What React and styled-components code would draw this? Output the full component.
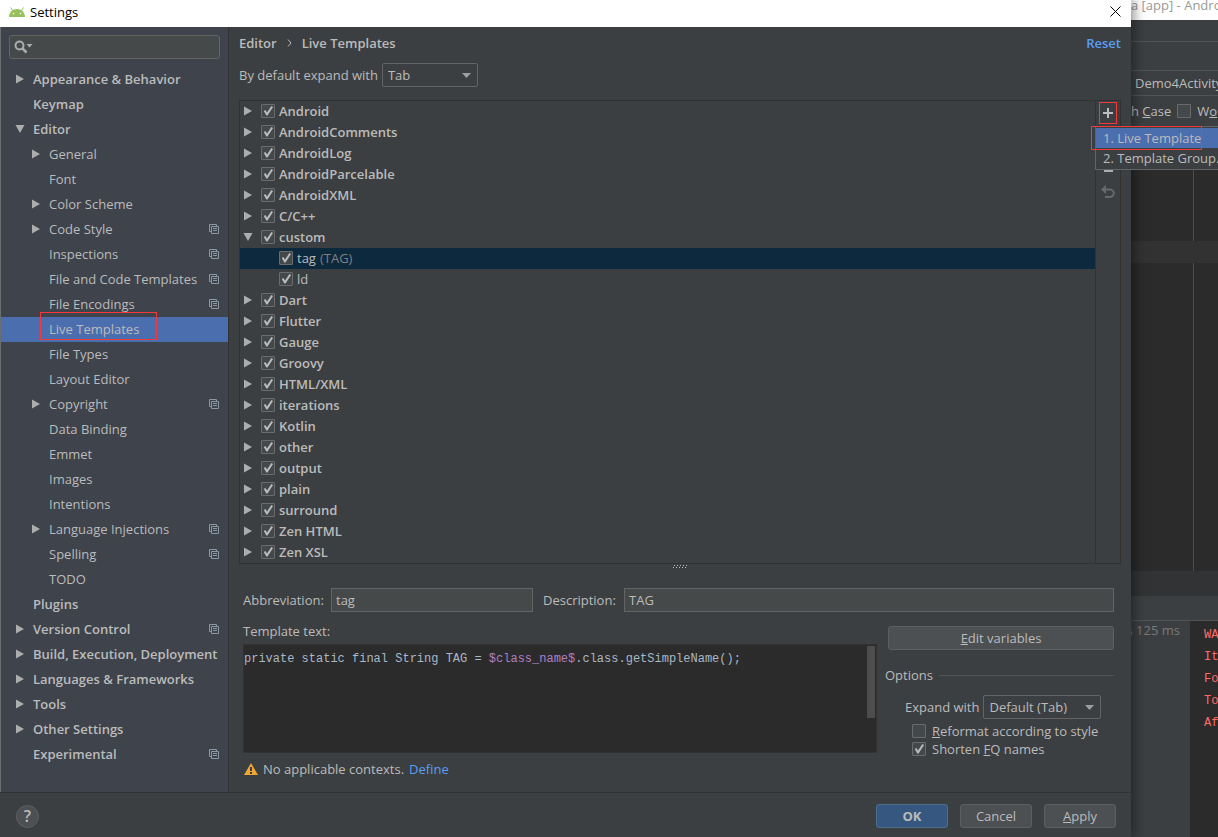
import React from 'react'
import styled, { createGlobalStyle } from 'styled-components'

const settings = [
  { label: 'Appearance & Behavior', arrow: 'right' },
  { label: 'Keymap' },
  { label: 'Editor', arrow: 'down' },
  { label: 'General', arrow: 'right', child: true },
  { label: 'Font', child: true },
  { label: 'Color Scheme', arrow: 'right', child: true },
  { label: 'Code Style', arrow: 'right', child: true, project: true },
  { label: 'Inspections', child: true, project: true },
  { label: 'File and Code Templates', child: true, project: true },
  { label: 'File Encodings', child: true, project: true },
  { label: 'Live Templates', child: true, selected: true },
  { label: 'File Types', child: true },
  { label: 'Layout Editor', child: true },
  { label: 'Copyright', arrow: 'right', child: true, project: true },
  { label: 'Data Binding', child: true },
  { label: 'Emmet', child: true },
  { label: 'Images', child: true },
  { label: 'Intentions', child: true },
  { label: 'Language Injections', arrow: 'right', child: true, project: true },
  { label: 'Spelling', child: true, project: true },
  { label: 'TODO', child: true },
  { label: 'Plugins' },
  { label: 'Version Control', arrow: 'right', project: true },
  { label: 'Build, Execution, Deployment', arrow: 'right' },
  { label: 'Languages & Frameworks', arrow: 'right' },
  { label: 'Tools', arrow: 'right' },
  { label: 'Other Settings', arrow: 'right' },
  { label: 'Experimental', project: true },
]

const templates = [
  { label: 'Android' },
  { label: 'AndroidComments' },
  { label: 'AndroidLog' },
  { label: 'AndroidParcelable' },
  { label: 'AndroidXML' },
  { label: 'C/C++' },
  { label: 'custom', open: true },
  { label: 'tag', note: '(TAG)', child: true, selected: true },
  { label: 'ld', child: true },
  { label: 'Dart' },
  { label: 'Flutter' },
  { label: 'Gauge' },
  { label: 'Groovy' },
  { label: 'HTML/XML' },
  { label: 'iterations' },
  { label: 'Kotlin' },
  { label: 'other' },
  { label: 'output' },
  { label: 'plain' },
  { label: 'surround' },
  { label: 'Zen HTML' },
  { label: 'Zen XSL' },
]

const Arrow = ({ direction }) => (
  <svg width="10" height="10" viewBox="0 0 10 10" fill="#adadad">
    {direction === 'right' && <path d="M1 0.5 9 5 1 9.5z" />}
    {direction === 'down' && <path d="M0.5 1h9L5 9z" />}
  </svg>
)

const ProjectIcon = () => (
  <svg width="10" height="10" viewBox="0 0 10 10" fill="none" stroke="#8a97a5">
    <path d="M2 7.5H.5v-7h7V2" />
    <path d="M2.5 2.5h7v7h-7zM4 4.500h4M4 6.500h4" />
  </svg>
)

const Design = () => {
  return (
    <Screen>
      <GlobalStyle />
      <Dialog>
        <TitleBar>
          <svg width="16" height="10" viewBox="0 0 16 10">
            <path d="M0 10a8 8 0 0 1 16 0z" fill="#97c15c" />
            <path d="M1.500 .5 4 4M14.500 .5l-2.500 3.500" stroke="#97c15c" />
            <circle cx="4.500" cy="6.500" r=".8" fill="#fff" />
            <circle cx="11.500" cy="6.500" r=".8" fill="#fff" />
          </svg>
          <h1>Settings</h1>
          <CloseButton aria-label="Close">
            <svg width="11" height="11" viewBox="0 0 11 11" stroke="#000">
              <path d="M.5.5l10 10M10.500.5l-10 10" />
            </svg>
          </CloseButton>
        </TitleBar>
        <Body>
          {/* Settings tree */}
          <Sidebar>
            <Search>
              <svg width="19" height="14" viewBox="0 0 19 14">
                <circle cx="5.500" cy="5.500" r="4" fill="none" stroke="#adadad" strokeWidth="2" />
                <path d="M8.500 8.500l4 4" stroke="#adadad" strokeWidth="2.500" />
                <path d="M12.500 4h6l-3 3.500z" fill="#adadad" />
              </svg>
              <input type="text" aria-label="Search settings" />
            </Search>
            <ul>
              {settings.map(item => (
                <SettingRow key={item.label} $child={item.child} $selected={item.selected}>
                  <Arrow direction={item.arrow} />
                  <a href="#">{item.label}</a>
                  {item.project && <ProjectIcon />}
                  {item.selected && <SidebarMark />}
                </SettingRow>
              ))}
            </ul>
          </Sidebar>
          <Main>
            <Heading>
              <h2>Editor</h2>
              <svg width="5" height="8" viewBox="0 0 5 8" fill="none" stroke="#bbb">
                <path d="M1 .5 4 4 1 7.500" />
              </svg>
              <h2>Live Templates</h2>
              <a href="#">Reset</a>
            </Heading>
            <ExpandRow>
              <label htmlFor="default-expand">By default expand with</label>
              <SelectBox $width={96}>
                <select id="default-expand" defaultValue="Tab">
                  <option>Tab</option>
                  <option>Enter</option>
                  <option>Space</option>
                </select>
                <SelectArrow />
              </SelectBox>
            </ExpandRow>
            {/* Template groups */}
            <TreePanel>
              <ul>
                {templates.map(item => (
                  <TemplateRow key={item.label} $child={item.child} $selected={item.selected}>
                    <Arrow direction={item.child ? undefined : item.open ? 'down' : 'right'} />
                    <label>
                      <CheckBox type="checkbox" defaultChecked />
                      {item.label}
                      {item.note && <small>{item.note}</small>}
                    </label>
                  </TemplateRow>
                ))}
              </ul>
              <Toolbar>
                <AddButton aria-label="Add">
                  <svg width="12" height="12" viewBox="0 0 12 12" stroke="#bdbdbd" strokeWidth="2">
                    <path d="M6 1v10M1 6h10" />
                  </svg>
                </AddButton>
                <AddMenu>
                  <MenuItem $active>1. Live Template</MenuItem>
                  <MenuItem>2. Template Group...</MenuItem>
                  <MenuMark />
                </AddMenu>
                <ToolButton aria-label="Duplicate">
                  <svg width="12" height="12" viewBox="0 0 12 12" fill="#adadad">
                    <path d="M2 8h9v2H2z" />
                  </svg>
                </ToolButton>
                <ToolButton aria-label="Revert">
                  <svg width="14" height="14" viewBox="0 0 14 14" fill="none" stroke="#66696b" strokeWidth="2">
                    <path d="M3 4.500h6a3.500 3.500 0 0 1 0 7.500H4" />
                    <path d="M5 0v9L0 4.500z" fill="#66696b" stroke="none" />
                  </svg>
                </ToolButton>
              </Toolbar>
            </TreePanel>
            <Splitter>
              <svg width="16" height="5" viewBox="0 0 16 5" fill="#bbb">
                {[0, 3, 6, 9, 12].map(x => (
                  <path key={x} d={`M${x + 2} 1h1v1h-1zM${x + 1} 3h1v1h-1z`} />
                ))}
              </svg>
            </Splitter>
            {/* Template details */}
            <Details>
              <Fields>
                <label htmlFor="abbreviation">Abbreviation:</label>
                <TextInput id="abbreviation" defaultValue="tag" />
                <label htmlFor="description">Description:</label>
                <TextInput id="description" defaultValue="TAG" />
              </Fields>
              <Columns>
                <TextColumn>
                  <p>Template text:</p>
                  <CodeArea>
                    <code>
                      private static final String TAG = <var>$class_name$</var>
                      .class.getSimpleName();
                    </code>
                    <ScrollThumb />
                  </CodeArea>
                  <Context>
                    <svg width="14" height="12" viewBox="0 0 14 12">
                      <path d="M7 0l7 12H0z" fill="#f0a732" />
                      <path d="M6 4h2v4H6zM6 9h2v2H6z" fill="#3c3f41" />
                    </svg>
                    No applicable contexts. <a href="#">Define</a>
                  </Context>
                </TextColumn>
                <OptionsColumn>
                  <Button>
                    <u>E</u>dit variables
                  </Button>
                  <OptionsTitle>Options</OptionsTitle>
                  <OptionSelect>
                    <label htmlFor="expand-with">Expand with</label>
                    <SelectBox $width={118}>
                      <select id="expand-with" defaultValue="Default (Tab)">
                        <option>Default (Tab)</option>
                        <option>Enter</option>
                        <option>None</option>
                      </select>
                      <SelectArrow />
                    </SelectBox>
                  </OptionSelect>
                  <Option>
                    <CheckBox type="checkbox" />
                    <span>
                      <u>R</u>eformat according to style
                    </span>
                  </Option>
                  <Option>
                    <CheckBox type="checkbox" defaultChecked />
                    <span>
                      Shorten <u>F</u>Q names
                    </span>
                  </Option>
                </OptionsColumn>
              </Columns>
            </Details>
          </Main>
        </Body>
        <DialogFooter>
          <HelpButton aria-label="Help">?</HelpButton>
          <Button $primary>OK</Button>
          <Button>Cancel</Button>
          <Button>
            <u>A</u>pply
          </Button>
        </DialogFooter>
      </Dialog>
      {/* IDE window behind the dialog */}
      <Ide>
        <IdeTitle>a [app] - Andro</IdeTitle>
        <IdeBar $height={22} />
        <IdeBar $height={29} />
        <IdeBar $height={25}>
          <span>Demo4Activity.</span>
        </IdeBar>
        <FindBar>
          <span>
            h <u>C</u>ase
          </span>
          <label>
            <CheckBox type="checkbox" />
            <span>
              W<u>o</u>r
            </span>
          </label>
        </FindBar>
        <IdeEditor>
          <CaretRow />
        </IdeEditor>
        <IdeStrip />
        <IdeBar $height={25} />
        <Run>
          <RunTree>s 125 ms</RunTree>
          <Console>
            {['WA', 'It', 'Fo', 'To', 'Af'].map(line => (
              <p key={line}>{line}</p>
            ))}
          </Console>
        </Run>
      </Ide>
    </Screen>
  )
}

const SelectArrow = () => (
  <svg width="9" height="5" viewBox="0 0 9 5" fill="#9da0a2">
    <path d="M0 0h9L4.500 5z" />
  </svg>
)

const GlobalStyle = createGlobalStyle`
  * {
    box-sizing: border-box;
  }
  body {
    margin: 0;
    overflow: hidden;
    background: #3c3f41;
    color: #bbb;
    font: 13px/20px 'Open Sans', sans-serif;
  }
  h1, h2, p, ul {
    margin: 0;
    padding: 0;
    font-size: 13px;
    font-weight: inherit;
    list-style: none;
  }
  svg {
    display: block;
    flex: none;
  }
  a {
    color: #589df6;
    text-decoration: none;
  }
  button, input, select {
    font: inherit;
    color: inherit;
    margin: 0;
  }
`

const Screen = styled.div`
  display: flex;
  min-height: 100vh;
`

const Dialog = styled.section`
  position: relative;
  z-index: 1;
  flex: 1;
  min-width: 0;
  display: flex;
  flex-direction: column;
  background: #3c3f41;
  box-shadow: 2px 0 12px rgba(0, 0, 0, 0.5);
`

const TitleBar = styled.header`
  display: flex;
  align-items: center;
  height: 27px;
  padding: 0 10px 4px 9px;
  gap: 5px;
  background: #fff;
  color: #000;

  > h1 {
    flex: 1;
  }
`

const CloseButton = styled.button`
  padding: 0;
  border: 0;
  background: none;
`

const Body = styled.div`
  flex: 1;
  display: flex;
  border-left: 1px solid #6b6e70;
`

const Sidebar = styled.nav`
  flex: none;
  width: 228px;
  padding-top: 8px;
  background: #3e434c;
  border-right: 1px solid #323232;
`

const Search = styled.label`
  display: flex;
  align-items: center;
  height: 24px;
  margin: 0 8px 8px;
  padding-left: 4px;
  background: #45494a;
  border: 1px solid #646464;
  border-radius: 3px;

  > input {
    flex: 1;
    min-width: 0;
    border: 0;
    outline: 0;
    background: none;
  }
`

const SettingRow = styled.li`
  position: relative;
  display: flex;
  align-items: center;
  gap: 8px;
  height: 25px;
  padding: 0 9px 2px ${props => (props.$child ? '30px' : '14px')};
  background: ${props => (props.$selected ? '#4b6eaf' : 'none')};
  font-weight: ${props => (props.$child ? 400 : 600)};

  > a {
    flex: 1;
    color: inherit;
    white-space: nowrap;
  }
`

const SidebarMark = styled.div`
  position: absolute;
  left: 39px;
  top: -5px;
  width: 117px;
  height: 28px;
  border: 1px solid #f23a3a;
`

const Main = styled.main`
  flex: 1;
  min-width: 0;
  padding: 6px 10px 0;
`

const Heading = styled.div`
  display: flex;
  align-items: center;
  gap: 10px;
  font-weight: 600;

  > a {
    margin-left: auto;
  }
`

const ExpandRow = styled.div`
  display: flex;
  align-items: center;
  gap: 4px;
  margin: 10px 0 13px;
`

const SelectBox = styled.div`
  display: flex;
  align-items: center;
  width: ${props => props.$width}px;
  height: 24px;
  padding-right: 6px;
  border: 1px solid #646464;
  border-radius: 2px;

  > select {
    flex: 1;
    min-width: 0;
    padding: 0 5px;
    border: 0;
    outline: 0;
    appearance: none;
    background: none;
  }
`

const TreePanel = styled.div`
  display: flex;
  border: 1px solid #323232;

  > ul {
    flex: 1;
  }
`

const TemplateRow = styled.li`
  display: flex;
  align-items: center;
  gap: 8px;
  height: 21px;
  padding: 0 0 1px ${props => (props.$child ? '21px' : '3px')};
  background: ${props => (props.$selected ? '#0d293e' : 'none')};
  font-weight: ${props => (props.$child ? 400 : 600)};

  > label {
    display: flex;
    align-items: center;
    gap: 4px;
  }

  small {
    color: #808080;
    font-size: 13px;
  }
`

const CheckBox = styled.input`
  flex: none;
  width: 14px;
  height: 14px;
  appearance: none;
  background: #43494a;
  border: 1px solid #6b6b6b;
  border-radius: 1px;

  &:checked::before {
    content: '';
    display: block;
    width: 12px;
    height: 12px;
    background: #bbb;
    clip-path: polygon(15% 50%, 28% 42%, 42% 62%, 78% 8%, 92% 16%, 46% 88%, 36% 88%);
  }
`

const Toolbar = styled.div`
  position: relative;
  flex: none;
  width: 25px;
  padding-top: 1px;
  border-left: 1px solid #323232;
`

const ToolButton = styled.button`
  display: grid;
  place-items: center;
  width: 24px;
  height: 24px;
  padding: 0;
  border: 0;
  background: none;
`

const AddButton = styled.button`
  display: grid;
  place-items: center;
  width: 18px;
  height: 22px;
  margin: 0 3px 32px;
  padding: 0;
  background: none;
  border: 1px solid #f23a3a;
`

/* Opens under the add button and runs past the dialog's edge */
const AddMenu = styled.div`
  position: absolute;
  left: -1px;
  top: 25px;
  width: 140px;
  padding: 1px 0;
  background: #3c3f41;
  border: 1px solid #616365;
`

const MenuItem = styled.button`
  display: block;
  width: 100%;
  height: 20px;
  padding: 0 7px;
  border: 0;
  line-height: 18px;
  text-align: left;
  white-space: nowrap;
  background: ${props => (props.$active ? '#4b6eaf' : 'none')};
`

const MenuMark = styled.div`
  position: absolute;
  left: -5px;
  top: -1px;
  width: 111px;
  height: 24px;
  border: 1px solid #f23a3a;
`

const Splitter = styled.div`
  display: grid;
  place-items: center;
  height: 5px;
`

const Details = styled.div`
  padding: 19px 7px 12px 4px;
`

const Fields = styled.div`
  display: grid;
  grid-template-columns: 78px 202px 71px 1fr;
  align-items: center;
  gap: 10px;
  white-space: nowrap;
`

const TextInput = styled.input`
  min-width: 0;
  width: 100%;
  height: 24px;
  padding: 0 4px;
  background: #45494a;
  border: 1px solid #646464;
  outline: 0;
`

const Columns = styled.div`
  display: flex;
  gap: 8px;
`

const TextColumn = styled.div`
  flex: 1;
  min-width: 0;
  padding-top: 9px;
`

const CodeArea = styled.div`
  display: flex;
  justify-content: space-between;
  height: 109px;
  margin: 3px 0 6px;
  padding: 1px 1px 1px 0;
  background: #2b2b2b;
  border: 1px solid #323232;

  code {
    padding-top: 2px;
    color: #a9b7c6;
    font: 12px/22px 'Liberation Mono', monospace;
    white-space: nowrap;
  }

  var {
    color: #b07fc4;
    font-style: normal;
  }
`

const ScrollThumb = styled.div`
  width: 8px;
  height: 72px;
  background: #4d4d4d;
`

const Context = styled.p`
  display: flex;
  align-items: center;
  gap: 5px;
  padding-left: 1px;
`

const OptionsColumn = styled.div`
  width: 229px;
  padding-top: 14px;

  > button {
    width: 226px;
    margin-left: 3px;
  }
`

const Button = styled.button`
  width: 72px;
  height: 24px;
  padding: 0;
  border: 1px solid ${props => (props.$primary ? '#4c708c' : '#5e6060')};
  border-radius: 3px;
  background: ${props => (props.$primary ? '#365880' : '#4c5052')};
  font-weight: ${props => (props.$primary ? 700 : 400)};
`

const OptionsTitle = styled.p`
  display: flex;
  align-items: center;
  gap: 6px;
  margin: 15px 0 10px;

  &::after {
    content: '';
    flex: 1;
    height: 1px;
    background: #515355;
  }
`

const OptionSelect = styled.div`
  display: flex;
  align-items: center;
  gap: 4px;
  margin: 0 0 3px 20px;
`

const Option = styled.label`
  display: flex;
  align-items: center;
  gap: 6px;
  height: 18px;
  margin-left: 27px;
`

const DialogFooter = styled.footer`
  display: flex;
  align-items: center;
  gap: 12px;
  height: 45px;
  padding: 2px 15px 0 16px;
  border-top: 1px solid #323232;
`

const HelpButton = styled.button`
  width: 23px;
  height: 23px;
  margin-right: auto;
  padding: 0;
  border: 1px solid #5e6060;
  border-radius: 50%;
  background: #4c5052;
  font-size: 16px;
  font-weight: 600;
  line-height: 20px;
`

const Ide = styled.aside`
  flex: none;
  width: 87px;
  display: flex;
  flex-direction: column;
  overflow: hidden;
  white-space: nowrap;
`

const IdeTitle = styled.div`
  height: 20px;
  background: #fff;
  color: #999;
  line-height: 10px;
`

const IdeBar = styled.div`
  height: ${props => props.$height}px;
  padding-left: 4px;
  border-bottom: 1px solid #515355;
  line-height: 25px;
`

const FindBar = styled.div`
  display: flex;
  align-items: center;
  gap: 6px;
  height: 30px;

  > label {
    display: flex;
    align-items: center;
    gap: 6px;
  }
`

const IdeEditor = styled.div`
  flex: 1;
  margin-right: 24px;
  padding-top: 115px;
  background: #2b2b2b;
  border-right: 1px solid #4d4d4d;
  box-shadow: 24px 0 #2b2b2b;
`

const CaretRow = styled.div`
  width: 87px;
  height: 22px;
  background: #323232;
`

const IdeStrip = styled.div`
  height: 25px;
  background: #313335;
`

const Run = styled.div`
  display: flex;
  height: 216px;
`

const RunTree = styled.div`
  display: flex;
  justify-content: flex-end;
  flex: none;
  width: 59px;
  padding-right: 10px;
  color: #787878;
  line-height: 18px;
`

const Console = styled.div`
  flex: 1;
  padding: 3px 0 0 14px;
  background: #2b2b2b;
  color: #ff6b68;
  font: 12px/22px 'Liberation Mono', monospace;

  > p {
    font-size: 12px;
  }
`

export default Design
